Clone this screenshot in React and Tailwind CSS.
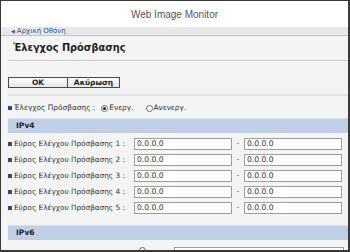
import React from 'react';

const ui = { fontFamily: '"DejaVu Sans", Verdana, sans-serif' };

function Bullet() {
  return <span className="inline-block w-[4px] h-[4px] bg-[#2b4a82] shrink-0" />;
}

function Radio({ checked }) {
  return (
    <span className="w-[7px] h-[7px] rounded-full border border-[#6b6b6b] bg-white flex items-center justify-center shrink-0">
      {checked && <span className="w-[3px] h-[3px] rounded-full bg-[#222]" />}
    </span>
  );
}

function IpBox({ value }) {
  return (
    <div className="w-[98px] h-[12px] bg-white border border-[#9c9c9c] flex items-center pl-[2px] text-[7.6px] leading-none text-[#333] shrink-0">
      {value}
    </div>
  );
}

function SectionBar({ label }) {
  return (
    <div className="h-[15px] bg-[#bfd0e6] border-t border-[#d6e1ef] flex items-center pl-[8px] text-[7.6px] font-bold text-[#222] leading-none">
      {label}
    </div>
  );
}

export default function App() {
  const ranges = [1, 2, 3, 4, 5];

  return (
    <div
      className="w-[350px] h-[252px] overflow-hidden border-t border-l border-r-2 border-b-2 border-[#3a3a3a] bg-[#f4f4f4] flex flex-col"
      style={ui}
    >
      {/* Header */}
      <div
        className="h-[26px] shrink-0 bg-white flex items-center justify-center text-[10px] text-[#555] pt-[1px]"
        style={{ fontFamily: '"Liberation Sans", Arial, sans-serif' }}
      >
        Web Image Monitor
      </div>

      {/* Breadcrumb */}
      <div className="h-[9px] shrink-0 bg-[#e8e8e8] border-b border-[#c4c4c4] flex items-center pl-[10px] gap-[2px] text-[7px] leading-none text-[#2f4f9f]">
        <span className="text-[5px]">◀</span>
        <span>Αρχική Οθόνη</span>
      </div>

      <div className="flex-1 pl-[7px] flex flex-col">
        {/* Title */}
        <div className="h-[25px] shrink-0 border-b border-[#cbcbcb] flex items-center pl-[5px] text-[9.8px] font-bold text-[#222] leading-none">
          Έλεγχος Πρόσβασης
        </div>

        {/* Buttons */}
        <div className="mt-[16px] flex shrink-0">
          <button className="w-[60px] h-[11px] border border-[#4a4a4a] bg-gradient-to-b from-white to-[#e6e6e6] text-[7.5px] font-bold text-[#222] leading-none flex items-center justify-center">
            OK
          </button>
          <button className="w-[52px] h-[11px] border border-l-0 border-[#4a4a4a] bg-gradient-to-b from-white to-[#e6e6e6] text-[7.5px] font-bold text-[#222] leading-none flex items-center justify-center">
            Ακύρωση
          </button>
        </div>

        <div className="mt-[6px] h-[2px] bg-[#e2e2e2] shrink-0" />

        {/* Access control toggle */}
        <div className="mt-[7px] h-[10px] flex items-center text-[7.4px] text-[#333] leading-none shrink-0">
          <Bullet />
          <span className="ml-[1px] mr-[6px] pl-[1px]">Έλεγχος Πρόσβασης :</span>
          <Radio checked />
          <span className="ml-[1px]">Ενεργ.</span>
          <span className="ml-[12px]"><Radio /></span>
          <span className="ml-[1px]">Ανενεργ.</span>
        </div>

        <div className="mt-[5px] shrink-0">
          <SectionBar label="IPv4" />
        </div>

        <div className="pt-[5px] flex flex-col gap-[4px] shrink-0">
          {ranges.map(n => (
            <div key={n} className="h-[12px] flex items-center">
              <div className="w-[126px] flex items-center text-[7.3px] text-[#333] leading-none shrink-0">
                <Bullet />
                <span className="ml-[1px] pl-[1px] whitespace-nowrap">Εύρος Ελέγχου Πρόσβασης {n} :</span>
              </div>
              <IpBox value="0.0.0.0" />
              <span className="w-[12px] text-center text-[8px] text-[#777] leading-none shrink-0">-</span>
              <IpBox value="0.0.0.0" />
            </div>
          ))}
        </div>

        <div className="mt-[11px] shrink-0">
          <SectionBar label="IPv6" />
        </div>

        <div className="mt-[7px] h-[12px] flex items-start shrink-0">
          <span className="ml-[131px]"><Radio /></span>
          <div className="ml-[28px] w-[170px] h-[12px] bg-white border border-[#9c9c9c]" />
        </div>
      </div>
    </div>
  );
}
